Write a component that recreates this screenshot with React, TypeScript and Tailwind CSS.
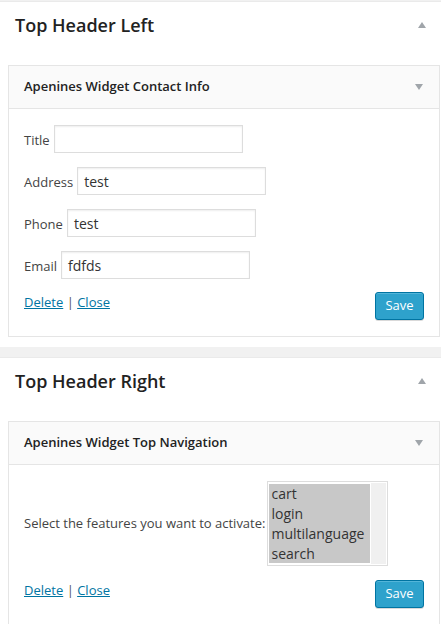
import React from "react";

function ArrowUp() {
  return <span className="block w-0 h-0 border-l-[4px] border-r-[4px] border-b-[6px] border-l-transparent border-r-transparent border-b-[#a0a5aa]" />;
}

function ArrowDown() {
  return <span className="block w-0 h-0 border-l-[4px] border-r-[4px] border-t-[6px] border-l-transparent border-r-transparent border-t-[#a0a5aa]" />;
}

function Field({ label, value }: { label: string; value: string }) {
  return (
    <div className="flex items-baseline gap-[4px]">
      <span className="text-[13px] text-[#444]">{label}</span>
      <div className="w-[189px] h-[28px] border border-[#ddd] shadow-[inset_0_1px_2px_rgba(0,0,0,0.07)] px-[6px] flex items-center text-[14px] text-[#333]">
        <span>{value || "\u00a0"}</span>
      </div>
    </div>
  );
}

function Actions() {
  return (
    <div className="flex justify-between items-start">
      <div className="text-[13px] text-[#555] leading-[18px] pt-px">
        <a className="text-[#0074a2] underline">Delete</a> | <a className="text-[#0074a2] underline">Close</a>
      </div>
      <button className="w-[49px] h-[28px] rounded-[3px] bg-[#2ea2cc] border border-[#0074a2] text-white text-[13px] flex items-center justify-center shadow-[inset_0_1px_0_rgba(120,200,230,0.5),0_1px_0_rgba(0,0,0,0.15)]">
        Save
      </button>
    </div>
  );
}

function Sidebar({ title, children }: { title: string; children: React.ReactNode }) {
  return (
    <section className="bg-white border-t border-[#eaeaea] pl-2 pr-px pb-[10px]">
      <div className="flex items-center justify-between pl-[7px] pr-[14px] pt-[11px] pb-[28px]">
        <h2 className="text-[18px] leading-6 font-semibold text-[#222]">{title}</h2>
        <ArrowUp />
      </div>
      {children}
    </section>
  );
}

function Widget({ title, children }: { title: string; children: React.ReactNode }) {
  return (
    <div className="border border-[#e5e5e5] bg-white">
      <div className="h-[43px] bg-[#fafafa] border-b border-[#e5e5e5] flex items-center justify-between pl-[15px] pr-[16px]">
        <h3 className="text-[13px] font-semibold text-[#222]">{title}</h3>
        <ArrowDown />
      </div>
      <div className="px-[15px] pt-[16px] pb-[16px]">{children}</div>
    </div>
  );
}

export default function App() {
  return (
    <main className="w-[441px] h-[624px] overflow-hidden bg-[#f1f1f1] pt-px font-['Open_Sans',sans-serif]">
      <Sidebar title="Top Header Left">
        <Widget title="Apenines Widget Contact Info">
          <div className="flex flex-col gap-[14px]">
            <Field label="Title" value="" />
            <Field label="Address" value="test" />
            <Field label="Phone" value="test" />
            <Field label="Email" value="fdfds" />
          </div>
          <div className="mt-[13px]">
            <Actions />
          </div>
        </Widget>
      </Sidebar>

      <div className="h-[10px]" />

      <Sidebar title="Top Header Right">
        <Widget title="Apenines Widget Top Navigation">
          <div className="flex items-center gap-[2px]">
            <span className="text-[13px] text-[#444]">Select the features you want to activate:</span>
            <div className="w-[121px] h-[85px] border border-[#ddd] p-px flex gap-px">
              <div className="flex-1 bg-[#c8c8c8] my-px pl-[2px] text-[14px] leading-[20px] text-[#333]">
                <div>cart</div>
                <div>login</div>
                <div>multilanguage</div>
                <div>search</div>
              </div>
              <div className="w-[15px] bg-[#f0f0f0]" />
            </div>
          </div>
          <div className="mt-[14px]">
            <Actions />
          </div>
        </Widget>
      </Sidebar>
    </main>
  );
}
